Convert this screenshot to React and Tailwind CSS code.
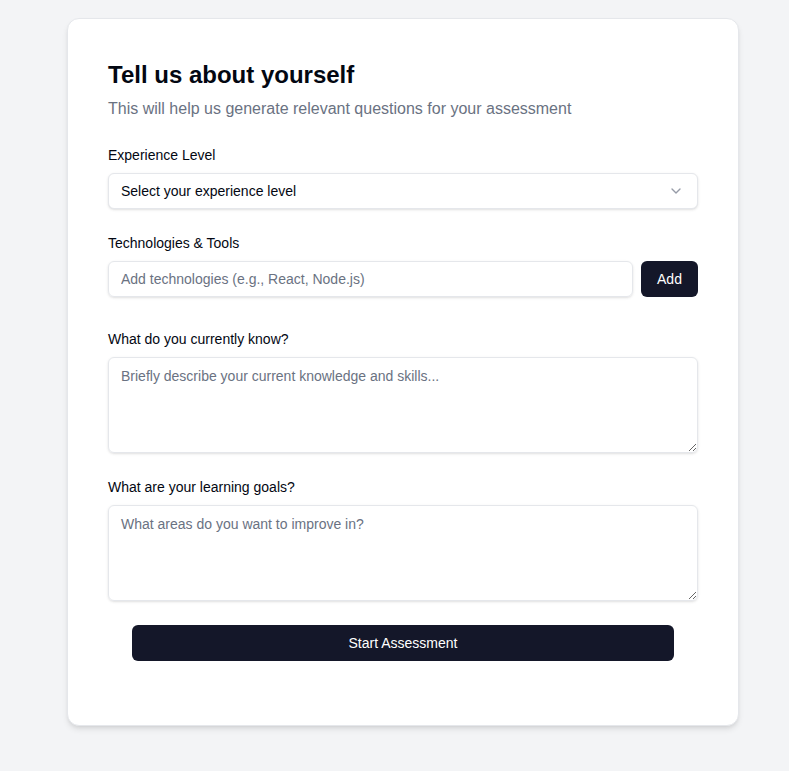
import React, { useState } from "react";
import { ChevronDown } from "lucide-react";

export default function App() {
  const [level, setLevel] = useState("");
  const [tech, setTech] = useState("");
  const [knows, setKnows] = useState("");
  const [goals, setGoals] = useState("");

  return (
    <div
      className="min-h-screen bg-gray-100 pl-[67px] pt-[18px] pb-12"
      style={{ fontFamily: '"Liberation Sans", Arial, sans-serif' }}
    >
      <div className="w-[672px] bg-white rounded-xl border border-gray-200 shadow-md p-10">
        {/* Header */}
        <div className="mb-6">
          <h1 className="text-2xl font-bold text-gray-950">Tell us about yourself</h1>
          <p className="mt-1.5 text-base text-gray-500">
            This will help us generate relevant questions for your assessment
          </p>
        </div>

        <div className="space-y-6 pb-6">
          <div>
            <label className="block text-sm text-gray-950 mb-2">Experience Level</label>
            <div className="relative">
              <select
                value={level}
                onChange={(e) => setLevel(e.target.value)}
                className="w-full h-9 appearance-none rounded-md border border-gray-200 shadow-sm bg-white px-3 text-sm text-gray-950 outline-none"
              >
                <option value="">Select your experience level</option>
                <option value="beginner">Beginner</option>
                <option value="intermediate">Intermediate</option>
                <option value="advanced">Advanced</option>
              </select>
              <ChevronDown
                size={16}
                className="absolute right-3.5 top-1/2 -translate-y-1/2 text-gray-500 opacity-70 pointer-events-none"
              />
            </div>
          </div>

          <div className="pb-2">
            <label className="block text-sm text-gray-950 mb-2">Technologies &amp; Tools</label>
            <div className="flex gap-2">
              <input
                value={tech}
                onChange={(e) => setTech(e.target.value)}
                placeholder="Add technologies (e.g., React, Node.js)"
                className="flex-1 h-9 rounded-md border border-gray-200 shadow-sm px-3 text-sm text-gray-950 placeholder:text-gray-500 outline-none"
              />
              <button className="h-9 w-[57px] rounded-md bg-[#141729] text-white text-sm font-medium">
                Add
              </button>
            </div>
          </div>

          <div>
            <label className="block text-sm text-gray-950 mb-2">What do you currently know?</label>
            <textarea
              value={knows}
              onChange={(e) => setKnows(e.target.value)}
              placeholder="Briefly describe your current knowledge and skills..."
              className="block w-full h-24 rounded-md border border-gray-200 shadow-sm px-3 py-2 text-sm text-gray-950 placeholder:text-gray-500 outline-none"
            />
          </div>

          <div>
            <label className="block text-sm text-gray-950 mb-2">What are your learning goals?</label>
            <textarea
              value={goals}
              onChange={(e) => setGoals(e.target.value)}
              placeholder="What areas do you want to improve in?"
              className="block w-full h-24 rounded-md border border-gray-200 shadow-sm px-3 py-2 text-sm text-gray-950 placeholder:text-gray-500 outline-none"
            />
          </div>

          <div className="px-6">
            <button className="w-full h-9 rounded-md bg-[#141729] text-white text-sm">
              Start Assessment
            </button>
          </div>
        </div>
      </div>
    </div>
  );
}
